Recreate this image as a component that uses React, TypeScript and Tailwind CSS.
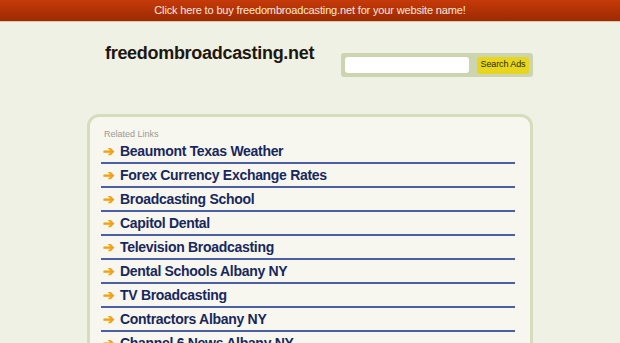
import React from "react";

const links = [
  "Beaumont Texas Weather",
  "Forex Currency Exchange Rates",
  "Broadcasting School",
  "Capitol Dental",
  "Television Broadcasting",
  "Dental Schools Albany NY",
  "TV Broadcasting",
  "Contractors Albany NY",
  "Channel 6 News Albany NY",
];

export default function App() {
  return (
    <div
      className="w-[620px] h-[343px] overflow-hidden bg-[#f0f1e5]"
      style={{ fontFamily: '"Liberation Sans", Arial, sans-serif' }}
    >
      <div className="h-[22px] bg-gradient-to-b from-[#c63a0a] to-[#9c2a02] border-b border-[#d8c8a8] flex items-center justify-center text-[11px] tracking-[-0.15px] text-[#fbe9dc]">
        Click here to buy freedombroadcasting.net for your website name!
      </div>
      <div className="flex items-start pl-[105px] pt-[18px]">
        <div className="text-[18px] font-bold tracking-[-0.3px] text-[#1c1810] leading-[26px] w-[236px]">
          freedombroadcasting.net
        </div>
        <div className="mt-[13px] w-[192px] h-[24px] rounded-[3px] bg-[#ccd5b0] flex items-center pl-[4px]">
          <div className="w-[124px] h-[16px] rounded-[3px] bg-white" />
          <div className="ml-[8px] w-[52px] h-[17px] rounded-[3px] bg-[#e8d61e] flex items-center justify-center text-[9px] tracking-[-0.1px] text-[#2a2a10]">
            Search Ads
          </div>
        </div>
      </div>
      <div className="ml-[87px] mt-[37px] w-[446px] h-[260px] rounded-[12px] border-[3px] border-[#d6ddbc] bg-[#f8f7ef] pl-[11px] pr-[15px] pt-[11px]">
        <div className="pl-[3px] text-[9px] text-[#9a9a90] leading-[12px]">Related Links</div>
        {links.map((l) => (
          <div
            key={l}
            className="h-[24px] border-b-2 border-[#4b60a2] flex items-center pl-[2px]"
          >
            <span className="text-[#f0a414] text-[14px] font-bold w-[17px] leading-none">➔</span>
            <span className="text-[14px] font-bold tracking-[-0.3px] text-[#17275e] leading-none">{l}</span>
          </div>
        ))}
      </div>
    </div>
  );
}
